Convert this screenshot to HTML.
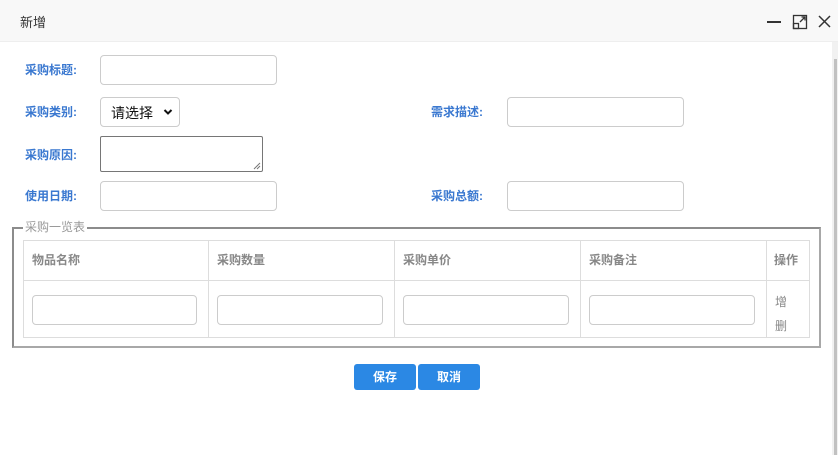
<!DOCTYPE html>
<html><head><meta charset="utf-8"><style>
*{box-sizing:border-box;margin:0;padding:0}
body{width:838px;height:455px;background:#fff;position:relative;overflow:hidden;font-family:"Liberation Sans","Noto Sans CJK SC",sans-serif}
.a{position:absolute}
.title{left:0;top:0;width:838px;height:42px;background:#f8f8f8;border-bottom:1px solid #eee}
.lbl{font-size:12px;font-weight:bold;color:#3a78d0;line-height:14px}
.in{border:1px solid #ccc;border-radius:4px;background:#fff}
.th{font-size:12px;font-weight:bold;color:#888;line-height:14px}
.btn{background:#2b88e4;color:#fff;font-size:12px;font-weight:bold;text-align:center;line-height:26px;border-radius:3px;height:26px;width:62px}
</style></head><body>
<div class="a title"></div>
<div class="a" style="left:20px;top:12px;font-size:13px;color:#333">新增</div>
<div class="a" style="left:767px;top:21px;width:14px;height:2px;background:#333"></div>
<svg class="a" style="left:792px;top:14px" width="16" height="16" viewBox="0 0 16 16" fill="none" stroke="#333" stroke-width="1.3"><rect x="1.5" y="1.5" width="13" height="13"/><rect x="1.5" y="9.5" width="5" height="5"/><path d="M8 8L13 3M9.5 3H13V6.5"/></svg>
<svg class="a" style="left:818px;top:15px" width="13" height="13" viewBox="0 0 13 13" stroke="#333" stroke-width="1.5"><path d="M1 1L12 12M12 1L1 12"/></svg>
<div class="a" style="left:832px;top:42px;width:6px;height:413px;background:#f1f1f1"></div>
<div class="a" style="left:834px;top:59px;width:3px;height:396px;background:#c1c1c1"></div>

<div class="a lbl" style="left:25px;top:63px">采购标题:</div>
<div class="a in" style="left:100px;top:55px;width:177px;height:30px"></div>
<div class="a lbl" style="left:25px;top:105px">采购类别:</div>
<div class="a in" style="left:100px;top:97px;width:80px;height:30px;font-size:14px;color:#111;padding:5px 0 0 10px">请选择</div>
<svg class="a" style="left:163px;top:108px" width="10" height="8" viewBox="0 0 10 8"><path d="M1.5 2L5 5.5L8.5 2" stroke="#111" stroke-width="2" fill="none"/></svg>
<div class="a lbl" style="left:431px;top:105px">需求描述:</div>
<div class="a in" style="left:507px;top:97px;width:177px;height:30px"></div>
<div class="a lbl" style="left:25px;top:148px">采购原因:</div>
<div class="a" style="left:100px;top:136px;width:163px;height:36px;border:1px solid #767676;border-radius:2px"></div>
<svg class="a" style="left:253px;top:162px" width="8" height="8"><path d="M7 1L1 7M7 4L4 7" stroke="#777" stroke-width="1"/></svg>
<div class="a lbl" style="left:25px;top:189px">使用日期:</div>
<div class="a in" style="left:100px;top:181px;width:177px;height:30px"></div>
<div class="a lbl" style="left:431px;top:189px">采购总额:</div>
<div class="a in" style="left:507px;top:181px;width:177px;height:30px"></div>

<div class="a" style="left:12px;top:227px;width:809px;height:121px;border:2px solid #8c8c8c;border-right-color:#a8a8a8;border-bottom-color:#a8a8a8"></div>
<div class="a" style="left:23px;top:220px;background:#fff;padding:0 2px;font-size:12px;color:#999;line-height:14px">采购一览表</div>
<div class="a" style="left:23px;top:240px;width:787px;height:98px;border:1px solid #ddd"></div>
<div class="a" style="left:23px;top:280px;width:787px;height:1px;background:#ddd"></div>
<div class="a" style="left:208px;top:240px;width:1px;height:98px;background:#ddd"></div>
<div class="a" style="left:394px;top:240px;width:1px;height:98px;background:#ddd"></div>
<div class="a" style="left:580px;top:240px;width:1px;height:98px;background:#ddd"></div>
<div class="a" style="left:766px;top:240px;width:1px;height:98px;background:#ddd"></div>
<div class="a th" style="left:32px;top:253px">物品名称</div>
<div class="a th" style="left:217px;top:253px">采购数量</div>
<div class="a th" style="left:403px;top:253px">采购单价</div>
<div class="a th" style="left:589px;top:253px">采购备注</div>
<div class="a th" style="left:774px;top:253px">操作</div>
<div class="a in" style="left:32px;top:295px;width:165px;height:30px"></div>
<div class="a in" style="left:217px;top:295px;width:166px;height:30px"></div>
<div class="a in" style="left:403px;top:295px;width:166px;height:30px"></div>
<div class="a in" style="left:589px;top:295px;width:166px;height:30px"></div>
<div class="a" style="left:775px;top:290px;font-size:12px;color:#888;line-height:24px">增<br>删</div>

<div class="a btn" style="left:354px;top:364px">保存</div>
<div class="a btn" style="left:418px;top:364px">取消</div>
</body></html>
